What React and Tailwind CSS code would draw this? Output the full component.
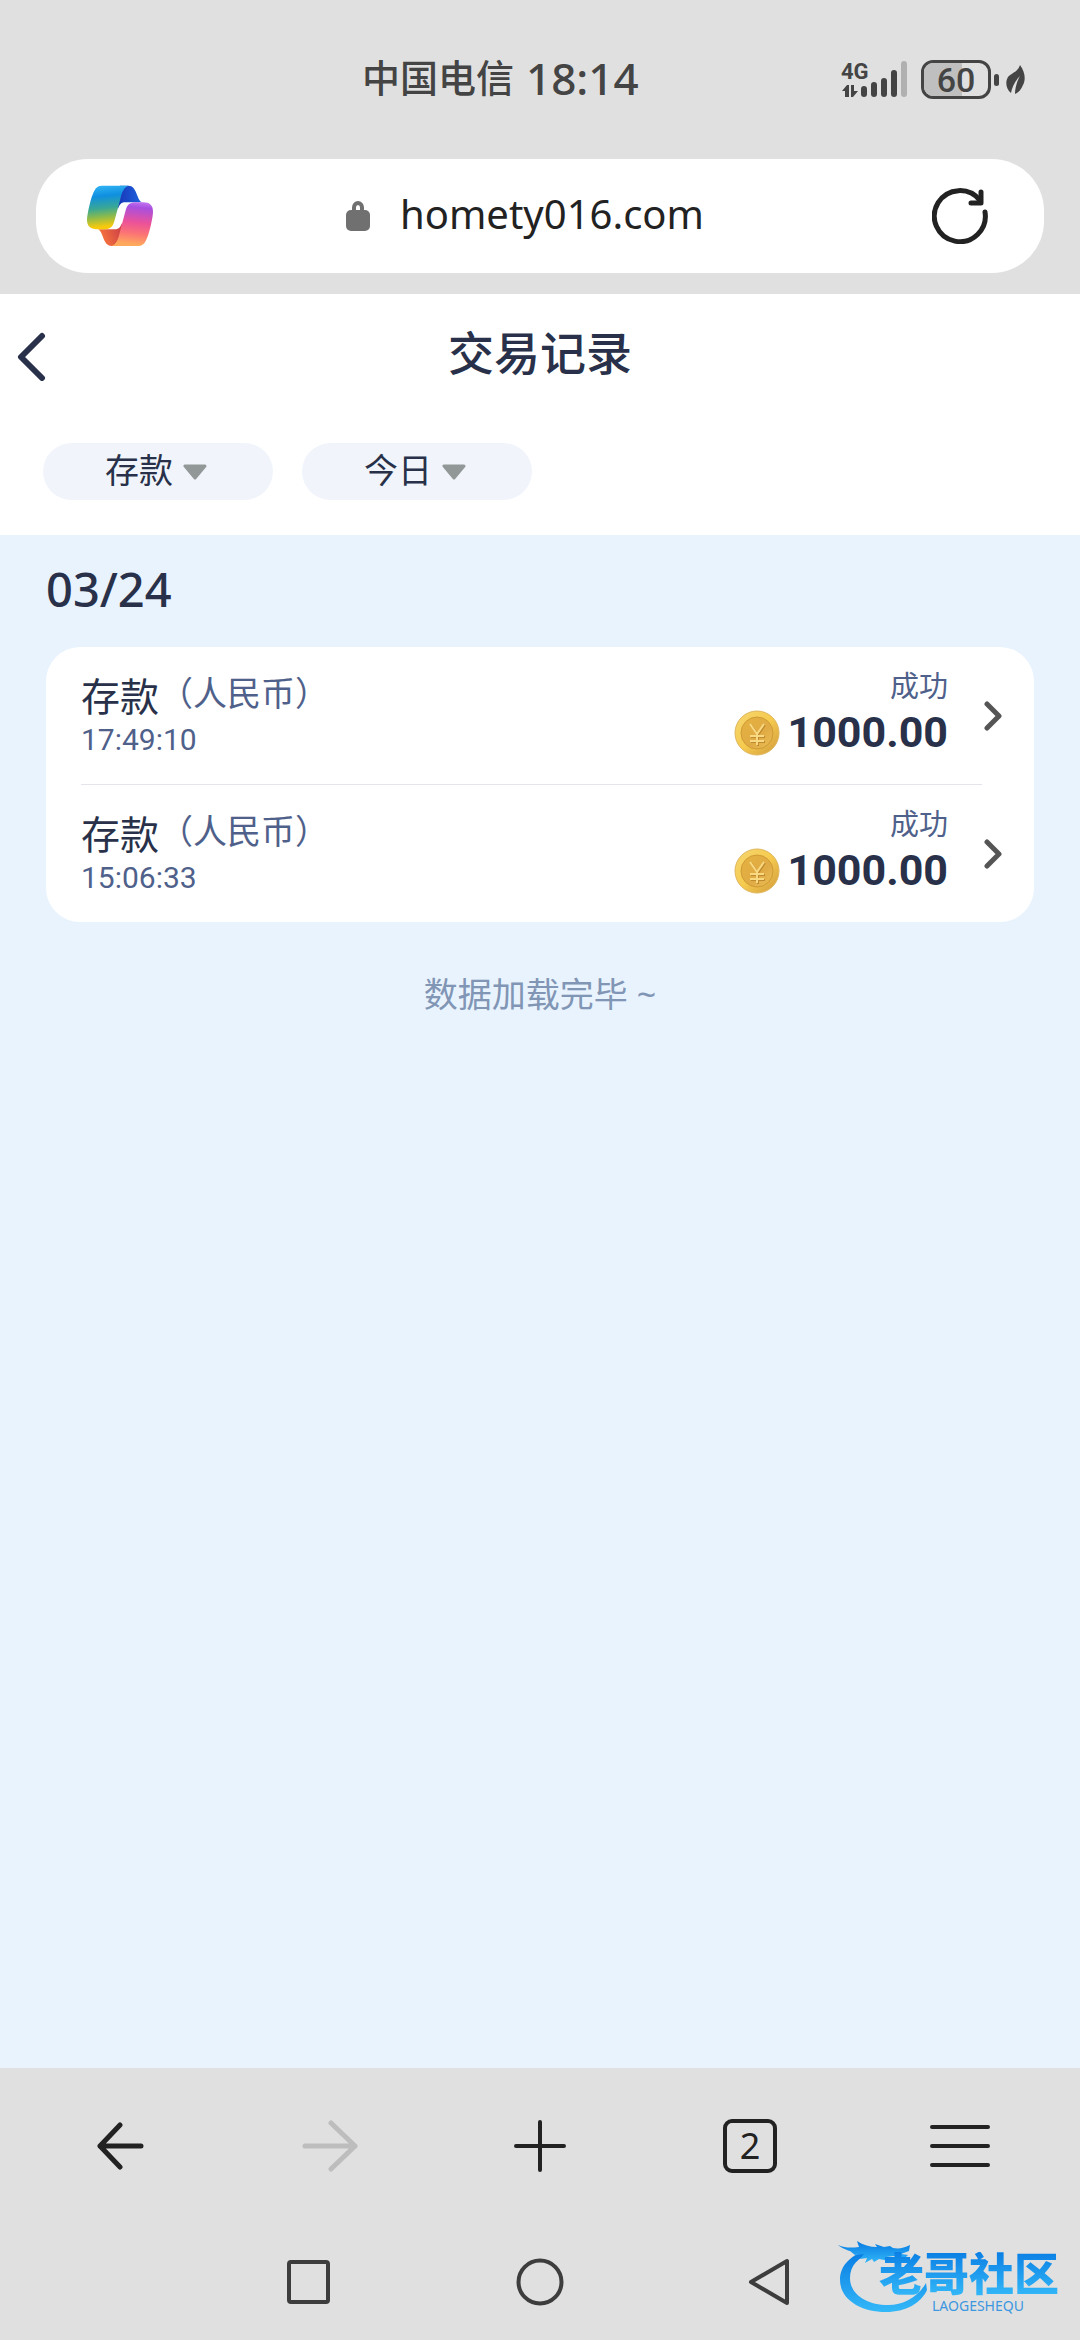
import { useState } from "react";

const records = [
  { id: 1, type: "存款", currency: "（人民币）", time: "17:49:10", status: "成功", amount: "1000.00" },
  { id: 2, type: "存款", currency: "（人民币）", time: "15:06:33", status: "成功", amount: "1000.00" },
];

const SignalIcon = () => (
  <svg className="overflow-visible" width="68" height="40" viewBox="0 0 68 40" fill="#444">
    <text x="0" y="19" fontSize="22" fontWeight="700" fontFamily="Roboto, sans-serif">
      4G
    </text>
    <path d="M1 31l5-6h2v12H4v-6z" />
    <path d="M10 25h3v6h4l-5 6h-2z" />
    <rect x="20" y="26" width="6" height="11" rx="3" />
    <rect x="30" y="22" width="6" height="15" rx="3" />
    <rect x="40" y="18" width="6" height="19" rx="3" />
    <rect x="50" y="10" width="6" height="27" rx="3" />
    <rect x="60" y="1" width="6" height="36" rx="3" fill="#b0b0b0" />
  </svg>
);

const LeafIcon = () => (
  <svg width="20" height="32" viewBox="0 0 20 32" fill="#444">
    <path d="M14 1c5 7 6 14 3 20-2 5-5 8-8 9C9 24 11 17 14 12 9 17 6 23 5 29 0 25-1 18 2 13 5 9 12 8 14 1z" />
  </svg>
);

const StatusBar = () => (
  <div className="flex items-center justify-between h-[159px] pl-[362px] pr-[54px] text-[#444]">
    <div className="flex items-center gap-3 pb-1 font-medium">
      <span className="text-[38px]">中国电信</span>
      <span className="text-[44px]">18:14</span>
    </div>
    <div className="flex items-center">
      <SignalIcon />
      <div className="relative flex items-center justify-center ml-3 w-[70px] h-[39px] border-[3px] border-[#444] rounded-xl overflow-hidden">
        <div className="absolute inset-y-0 left-0 w-3/5 bg-[#bfbfbf]" />
        <span className="relative font-[Roboto] font-medium text-[34px] leading-none">60</span>
      </div>
      <div className="ml-[3px] w-[5px] h-3 rounded-full bg-[#444]" />
      <div className="ml-[7px]">
        <LeafIcon />
      </div>
    </div>
  </div>
);

const CopilotLogo = () => (
  <svg width="68" height="62" viewBox="168 105 204 186">
    <defs>
      <linearGradient id="cool" x1="0" y1="0" x2="0.1" y2="1">
        <stop offset="0" stopColor="#35b8f5" />
        <stop offset="0.27" stopColor="#0f8fe0" />
        <stop offset="0.55" stopColor="#3aa894" />
        <stop offset="0.75" stopColor="#8fbb4a" />
        <stop offset="0.97" stopColor="#f8ca0c" />
      </linearGradient>
      <linearGradient id="warm" x1="0" y1="1" x2="0.1" y2="0">
        <stop offset="0" stopColor="#c77bf2" />
        <stop offset="0.15" stopColor="#a84fe0" />
        <stop offset="0.5" stopColor="#ec5298" />
        <stop offset="0.75" stopColor="#fb7375" />
        <stop offset="1" stopColor="#ffa95c" />
      </linearGradient>
      <linearGradient id="foldBlue" x1="1" y1="0.6" x2="0" y2="0.6">
        <stop offset="0" stopColor="#1f63dd" />
        <stop offset="1" stopColor="#1736b8" />
      </linearGradient>
      <linearGradient id="foldRed" x1="1" y1="0.4" x2="0" y2="0.8">
        <stop offset="0" stopColor="#fb7a3c" />
        <stop offset="1" stopColor="#c93c46" />
      </linearGradient>
    </defs>
    <path fill="url(#foldBlue)" d="M270 107h25c27 0 24 43 41 50h-50c-14 0-18 8-23 22z" />
    <path fill="url(#foldRed)" transform="rotate(180 270 197.500)" d="M270 107h25c27 0 24 43 41 50h-50c-14 0-18 8-23 22z" />
    <path fill="url(#cool)" d="M216 107h80c-15 4-21 22-25 40l-18 67c-5 18-13 24-30 24h-22c-27 0-34-16-28-46 5-28 12-55 20-70 5-10 12-15 23-15z" />
    <path
      fill="url(#warm)"
      transform="rotate(180 270 197.500)"
      d="M216 107h80c-15 4-21 22-25 40l-18 67c-5 18-13 24-30 24h-22c-27 0-34-16-28-46 5-28 12-55 20-70 5-10 12-15 23-15z"
    />
  </svg>
);

const AddressBar = () => {
  const [url, setUrl] = useState("homety016.com");

  return (
    <div className="px-9 pb-[21px]">
      <div className="flex items-center h-[114px] pl-[50px] pr-14 bg-white rounded-[52px]">
        <button aria-label="Copilot">
          <CopilotLogo />
        </button>
        <div className="flex flex-1 items-center justify-center gap-[30px] pr-9">
          <svg width="24" height="30" viewBox="0 0 24 30">
            <rect x="0" y="9" width="24" height="21" rx="5" fill="#707070" />
            <path d="M8 11V6.500a4 4.500 0 0 1 8 0V11" fill="none" stroke="#707070" strokeWidth="4" />
          </svg>
          <input
            aria-label="网址"
            value={url}
            onChange={(e) => setUrl(e.target.value)}
            className="field-sizing-content pb-1 text-[40px] text-[#222] outline-none"
          />
        </div>
        <button aria-label="刷新">
          <svg width="56" height="56" viewBox="0 0 56 56" fill="none" stroke="#222" strokeWidth="5" strokeLinecap="round" strokeLinejoin="round">
            <path d="M53 24A25.500 25.500 0 1 1 48 12.500" />
            <path d="M49 4v11H39" />
          </svg>
        </button>
      </div>
    </div>
  );
};

const Filter = ({ label, options }) => (
  <label className="flex items-center justify-center gap-[10px] w-[230px] h-[57px] pr-1 rounded-full bg-[#f1f5fb]">
    <select aria-label={label} className="appearance-none bg-transparent pb-1 text-[34px] leading-none text-[#283149] outline-none">
      {options.map((option) => (
        <option key={option}>{option}</option>
      ))}
    </select>
    <svg width="24" height="16" viewBox="0 0 24 16">
      <path d="M2 2h20l-10 12z" fill="#929797" stroke="#929797" strokeWidth="3" strokeLinejoin="round" />
    </svg>
  </label>
);

const Coin = () => (
  <svg width="46" height="46" viewBox="0 0 46 46">
    <defs>
      <linearGradient id="coinRim" x1="0" y1="0" x2="1" y2="1">
        <stop offset="0" stopColor="#f5d672" />
        <stop offset="0.5" stopColor="#f6cb4e" />
        <stop offset="1" stopColor="#d19a3c" />
      </linearGradient>
      <linearGradient id="coinFace" x1="0" y1="0" x2="1" y2="1">
        <stop offset="0" stopColor="#e5b23f" />
        <stop offset="0.6" stopColor="#e0ab45" />
        <stop offset="1" stopColor="#edc056" />
      </linearGradient>
    </defs>
    <circle cx="23" cy="23" r="22" fill="url(#coinRim)" stroke="#dfb65c" />
    <circle cx="23" cy="23" r="16" fill="url(#coinFace)" stroke="#cf9a35" />
    <path d="M17 15l7 10 7-10M24 25v11M17 27h14M17 32h14" fill="none" stroke="#c08a30" strokeWidth="2" />
    <path d="M16 14l7 10 7-10M23 24v11M16 26h14M16 31h14" fill="none" stroke="#f8d982" strokeWidth="2" />
  </svg>
);

const RecordRow = ({ record }) => (
  <button className="flex items-center w-full h-[137px] pr-8 text-left">
    <div className="flex-1 pb-1">
      <div className="flex items-start h-[52px]">
        <span className="text-[39px] leading-[52px] text-[#283149]">{record.type}</span>
        <span className="text-[34px] leading-[46px] text-[#4f618a]">{record.currency}</span>
      </div>
      <div className="font-[Roboto] text-[30px] leading-9 text-[#4f618a]">{record.time}</div>
    </div>
    <div className="text-right">
      <div className="text-[29px] leading-[34px] text-[#4f618a]">{record.status}</div>
      <div className="flex items-center gap-2 h-[60px]">
        <Coin />
        <span className="font-[Roboto] font-bold text-[43px] leading-none text-[#283149]">{record.amount}</span>
      </div>
    </div>
    <svg className="ml-9" width="18" height="30" viewBox="0 0 18 30" fill="none" stroke="#555" strokeWidth="5" strokeLinecap="round" strokeLinejoin="round">
      <path d="M3 3l12 12L3 27" />
    </svg>
  </button>
);

const BrowserToolbar = () => (
  <div className="grid grid-cols-5 place-items-center h-[156px] px-[15px] text-[#222]">
    <button aria-label="后退">
      <svg width="48" height="48" viewBox="0 0 48 48" fill="none" stroke="currentColor" strokeWidth="5" strokeLinecap="round" strokeLinejoin="round">
        <path d="M24 3L4 24l20 21M4 24h41" />
      </svg>
    </button>
    <button aria-label="前进" disabled className="text-[#bdbdbd]">
      <svg width="56" height="52" viewBox="0 0 56 52" fill="none" stroke="currentColor" strokeWidth="5" strokeLinecap="round" strokeLinejoin="round">
        <path d="M29 3l24 23-24 23M3 26h50" />
      </svg>
    </button>
    <button aria-label="新建标签页">
      <svg width="54" height="54" viewBox="0 0 54 54" fill="none" stroke="currentColor" strokeWidth="4" strokeLinecap="round">
        <path d="M27 3v48M3 27h48" />
      </svg>
    </button>
    <button aria-label="标签页" className="flex items-center justify-center w-[54px] h-[54px] border-4 border-[#222] rounded-[9px] text-4xl leading-none">
      2
    </button>
    <button aria-label="菜单">
      <svg width="60" height="48" viewBox="0 0 60 48" stroke="currentColor" strokeWidth="4" strokeLinecap="round">
        <path d="M2 5h56M2 24h56M2 43h56" />
      </svg>
    </button>
  </div>
);

const SystemNav = () => (
  <div className="flex items-center justify-center gap-[184px] h-[116px]">
    <button aria-label="最近任务">
      <svg width="48" height="48" viewBox="0 0 48 48" fill="none" stroke="#3d3d3d" strokeWidth="4">
        <rect x="5" y="4" width="39" height="40" rx="2" />
      </svg>
    </button>
    <button aria-label="主屏幕">
      <svg width="48" height="48" viewBox="0 0 48 48" fill="none" stroke="#3d3d3d" strokeWidth="4">
        <circle cx="24" cy="24" r="21.500" />
      </svg>
    </button>
    <button aria-label="返回">
      <svg width="48" height="48" viewBox="0 0 48 48" fill="none" stroke="#3d3d3d" strokeWidth="4" strokeLinejoin="round">
        <path d="M3 24L39 3v42z" />
      </svg>
    </button>
  </div>
);

const Watermark = () => (
  <div className="absolute right-[18px] bottom-[26px] w-[224px] h-[74px]">
    <svg width="224" height="74" viewBox="0 0 224 74">
      <defs>
        <linearGradient id="dragon" x1="0" y1="0" x2="0" y2="1">
          <stop offset="0.1" stopColor="#0b7fe4" />
          <stop offset="1" stopColor="#33b8f8" />
        </linearGradient>
      </defs>
      <g fill="url(#dragon)">
        <path d="M34 9C12 14 2 26 2 40c0 19 20 32 46 32 20 0 35-9 41-22l-1-7c-8 14-22 22-38 22-22 0-38-11-38-27 0-12 8-21 22-25z" />
        <path d="M0 5c7 3 13 3 21 2l-2-6c6 4 13 6 20 6l-2-3 9 3 6-1 3 2c6 1 11 0 17-3l-1 6-8 3 7 1-4 4-10-3-8 1 3 4-10-2-5 3-2-3-7 4 2-5-7 1 4-5-9 1-5-4C12 11 5 9 0 5z" />
      </g>
    </svg>
    <div className="absolute left-[41px] top-[12px] font-black text-[45px] leading-[44px] whitespace-nowrap text-transparent bg-clip-text bg-linear-to-b from-[#0b7fe4] to-[#33b8f8]">
      老哥社区
    </div>
    <div className="absolute left-[94px] top-[59px] text-sm leading-none text-[#3b97e0]">LAOGESHEQU</div>
  </div>
);

const App = () => (
  <div className="relative flex flex-col min-h-screen bg-[#e0e0e0] font-['Noto_Sans','Noto_Sans_CJK_SC',sans-serif]">
    <StatusBar />
    <AddressBar />

    {/* Page header */}
    <header className="h-[241px] bg-white">
      <div className="grid grid-cols-[1fr_auto_1fr] items-center h-[124px] px-[17px]">
        <button aria-label="返回上一页">
          <svg width="30" height="50" viewBox="0 0 30 50" fill="none" stroke="#283149" strokeWidth="6" strokeLinecap="round" strokeLinejoin="round">
            <path d="M25 5L4 26l21 21" />
          </svg>
        </button>
        <h1 className="pb-2 font-medium text-[46px] leading-none text-[#283149]">交易记录</h1>
      </div>
      <div className="flex gap-[29px] px-[43px] pt-[25px]">
        <Filter label="交易类型" options={["存款", "取款"]} />
        <Filter label="日期" options={["今日", "昨日"]} />
      </div>
    </header>

    {/* Records */}
    <main className="flex-1 bg-[#e8f3fe] px-[46px]">
      <h2 className="h-28 font-medium text-[47px] leading-[108px] text-[#283149]">03/24</h2>
      <div className="bg-white rounded-[34px] pl-[35px]">
        {records.map((record, i) => (
          <div key={record.id}>
            {i > 0 && <hr className="mr-[52px] border-[#e3e5ea]" />}
            <RecordRow record={record} />
          </div>
        ))}
      </div>
      <p className="mt-12 text-center text-[34px] leading-[48px] text-[#8195b5]">数据加载完毕 ~</p>
    </main>

    <BrowserToolbar />
    <SystemNav />
    <Watermark />
  </div>
);

export default App;
